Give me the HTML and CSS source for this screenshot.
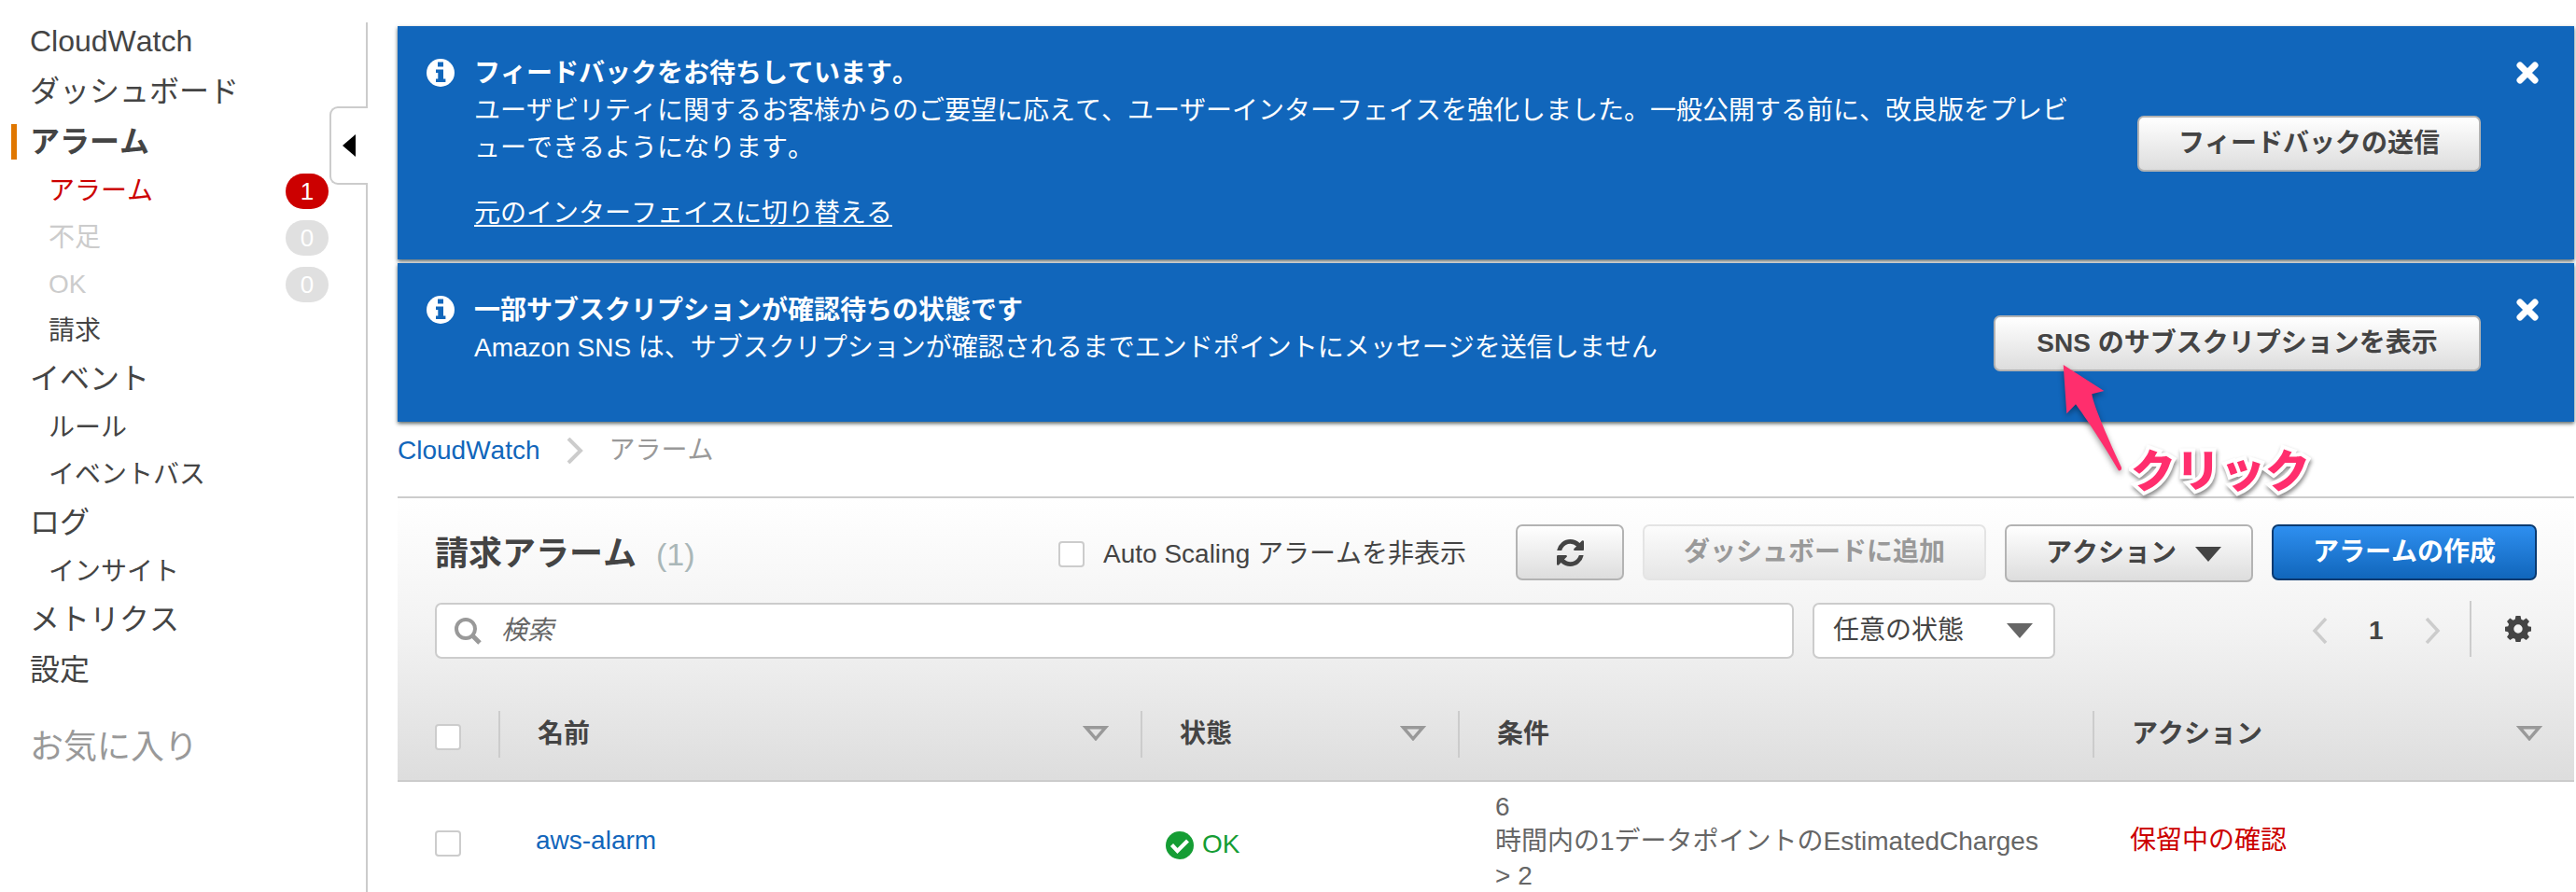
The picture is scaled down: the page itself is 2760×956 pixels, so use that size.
FILE: index.html
```html
<!DOCTYPE html>
<html lang="ja">
<head>
<meta charset="utf-8">
<title>CloudWatch</title>
<link rel="stylesheet" href="styles.css">
</head>
<body>
<svg class="defs" width="0" height="0">
  <symbol id="i-info" viewBox="0 0 30 30"><circle cx="15" cy="15" r="15" fill="#fff"/><path fill="#16b" d="M12 3.600h6v5h-6zM10 11.500h8v10h2.400V25H10v-3.500h2.300V15H10z"/></symbol>
  <symbol id="i-close" viewBox="0 0 24 24"><path d="M4 4l16 16M20 4L4 20" stroke="#fff" stroke-width="7" stroke-linecap="round" fill="none"/></symbol>
  <symbol id="i-sort" viewBox="0 0 28 16"><path d="M3.500 1.700h21L14 13.800z" fill="none" stroke="#999" stroke-width="3.400"/></symbol>
  <symbol id="i-down" viewBox="0 0 28 16"><path d="M0 0h28L14 16z" fill="currentColor"/></symbol>
</svg>
<div class="app">
  <nav class="side">
    <div class="item top">CloudWatch</div>
    <div class="item">ダッシュボード</div>
    <div class="item active">アラーム</div>
    <div class="sub red">アラーム<span class="badge on">1</span></div>
    <div class="sub off">不足<span class="badge">0</span></div>
    <div class="sub off">OK<span class="badge">0</span></div>
    <div class="sub">請求</div>
    <div class="item">イベント</div>
    <div class="sub">ルール</div>
    <div class="sub">イベントバス</div>
    <div class="item">ログ</div>
    <div class="sub">インサイト</div>
    <div class="item">メトリクス</div>
    <div class="item">設定</div>
    <div class="fav">お気に入り</div>
    <div class="tab"><svg width="14" height="24" viewBox="0 0 14 24"><path d="M14 0v24L0 12z"/></svg></div>
  </nav>
  <main class="main">
    <section class="banner b1">
      <svg class="info" width="30" height="30"><use href="#i-info"/></svg>
      <div class="msg"><b>フィードバックをお待ちしています。</b><br>ユーザビリティに関するお客様からのご要望に応えて、ユーザーインターフェイスを強化しました。一般公開する前に、改良版をプレビ<br>ューできるようになります。<div class="switch"><a>元のインターフェイスに切り替える</a></div></div>
      <div class="btn send">フィードバックの送信</div>
      <svg class="close" width="24" height="24"><use href="#i-close"/></svg>
    </section>
    <section class="banner b2">
      <svg class="info" width="30" height="30"><use href="#i-info"/></svg>
      <div class="msg"><b>一部サブスクリプションが確認待ちの状態です</b><br>Amazon SNS は、サブスクリプションが確認されるまでエンドポイントにメッセージを送信しません</div>
      <div class="btn show">SNS のサブスクリプションを表示</div>
      <svg class="close" width="24" height="24"><use href="#i-close"/></svg>
    </section>
    <div class="crumbs"><a>CloudWatch</a><svg width="18" height="28" viewBox="0 0 18 28"><path d="M2 1l13 13L2 27" fill="none" stroke="#ccc" stroke-width="4"/></svg><span>アラーム</span></div>
    <section class="panel">
      <div class="bar">
        <h1>請求アラーム</h1><span class="count">(1)</span>
        <span class="check"></span><span class="lbl">Auto Scaling アラームを非表示</span>
        <div class="btn refresh"><svg width="29" height="29" viewBox="0 0 1536 1536"><path fill="#444" d="M1511 928q0 5-1 7-64 268-268 434.500T764 1536q-146 0-282.500-55T238 1324l-129 129q-19 19-45 19t-45-19-19-45V960q0-26 19-45t45-19h448q26 0 45 19t19 45-19 45l-137 137q71 66 161 102t187 36q134 0 250-65t186-179q11-17 53-117 8-23 30-23h192q13 0 22.500 9.500t9.500 22.500zm25-800v448q0 26-19 45t-45 19h-448q-26 0-45-19t-19-45 19-45l138-138Q969 256 768 256q-134 0-250 65T332 500q-11 17-53 117-8 23-30 23H50q-13 0-22.500-9.500T18 608v-7q65-268 270-434.500T768 0q146 0 284 55.500T1297 212l130-129q19-19 45-19t45 19 19 45z"/></svg></div>
        <div class="btn disabled">ダッシュボードに追加</div>
        <div class="btn act">アクション<svg width="28" height="16"><use href="#i-down"/></svg></div>
        <div class="btn primary">アラームの作成</div>
      </div>
      <div class="filters">
        <div class="search"><svg width="29" height="29" viewBox="0 0 29 29"><circle cx="12" cy="12" r="10" fill="none" stroke="#999" stroke-width="4"/><path d="M19 19l8 8" stroke="#999" stroke-width="5"/></svg><i>検索</i></div>
        <div class="select">任意の状態<svg width="28" height="16"><use href="#i-down"/></svg></div>
        <div class="pager">
          <svg width="18" height="28" viewBox="0 0 18 28"><path d="M15 1L3 14l12 13" fill="none" stroke="#ccc" stroke-width="3.500"/></svg>
          <b>1</b>
          <svg width="18" height="28" viewBox="0 0 18 28"><path d="M3 1l12 13L3 27" fill="none" stroke="#ccc" stroke-width="3.500"/></svg>
        </div>
        <div class="gear"><svg width="28" height="28" viewBox="0 0 28 28"><path fill="#444" fill-rule="evenodd" d="M11.500 0h5l.8 3.800 2.200.9 3.200-2.200 3.300 3.400-2.100 3.200.9 2.200 3.200.5v4.700l-3.200.8-.9 2.200 2.100 3.200-3.300 3.300-3.200-2.100-2.200.9-.8 3.200h-5l-.8-3.200-2.200-.9-3.200 2.100L2 22.700l2.100-3.200-.9-2.200L0 16.500v-4.700l3.200-.5.9-2.200L2 5.900l3.300-3.400 3.200 2.200 2.200-.9zM14 9.300a4.700 4.700 0 1 0 0 9.400 4.700 4.700 0 0 0 0-9.400z"/></svg></div>
      </div>
      <div class="grid head">
        <div><span class="check"></span></div>
        <div class="th">名前<svg width="28" height="16"><use href="#i-sort"/></svg></div>
        <div class="th">状態<svg width="28" height="16"><use href="#i-sort"/></svg></div>
        <div class="th">条件</div>
        <div class="th">アクション<svg width="28" height="16"><use href="#i-sort"/></svg></div>
      </div>
    </section>
    <div class="grid row">
      <div><span class="check"></span></div>
      <div class="name"><a>aws-alarm</a></div>
      <div class="ok"><svg width="30" height="30" viewBox="0 0 30 30"><circle cx="15" cy="15" r="15" fill="#159d34"/><path d="M6.500 14.500l6 6.500 11-11" fill="none" stroke="#fff" stroke-width="4.200"/></svg>OK</div>
      <div class="cond">6<br>時間内の1データポイントのEstimatedCharges<br>&gt; 2</div>
      <div class="pend">保留中の確認</div>
    </div>
  </main>
  <svg class="arrow" width="90" height="130" viewBox="0 0 90 130"><path fill="#ff2e6d" d="M10.700 11L54.300 39l-13 3.300C43 55 60 93 73 121q.5 3.500-3 3.500C60 107 40 75 24 53.300L14.300 63.300z"/></svg>
  <div class="click">クリック</div>
</div>
</body>
</html>
```
FILE: styles.css
```css
* { box-sizing: border-box; }
body { margin: 0; background: #fff; }
.app {
  position: relative; display: flex; width: 2760px; height: 956px; overflow: hidden;
  font: 28px/40px "Liberation Sans", "Noto Sans CJK JP", sans-serif; color: #444; white-space: nowrap;
  font-kerning: none;
}
svg { display: block; flex: none; }
.defs { position: absolute; }
a { color: #16b; }

.side { position: relative; width: 394px; margin-top: 24px; border-right: 2px solid #ccc; flex: none; }
.item { height: 54px; line-height: 52px; font-size: 32px; padding-left: 32px; }
.item.top { height: 48px; line-height: 41px; }
.item.active { font-weight: bold; position: relative; }
.item.active::before { content: ""; position: absolute; left: 12px; top: 7px; width: 6px; height: 38px; background: #e07700; }
.sub { height: 50px; padding: 0 40px 0 52px; display: flex; justify-content: space-between; align-items: center; }
.red { color: #c00; }
.off { color: #ccc; }
.badge { width: 46px; height: 38px; border-radius: 19px; background: #e0e0e0; color: #fff; text-align: center; line-height: 38px; font-size: 26px; }
.badge.on { background: #c00; }
.fav { font-size: 36px; color: #999; padding-left: 32px; line-height: 54px; margin-top: 28px; }
.tab {
  position: absolute; left: 353px; top: 90px; width: 41px; height: 84px; background: #fff;
  border: 2px solid #ccc; border-right: 0; border-radius: 9px 0 0 9px; display: flex; align-items: center; padding-left: 12px;
}

.main { width: 2332px; margin-left: 32px; padding-top: 28px; flex: none; }
.banner { display: flex; background: #16b; color: #fff; box-shadow: 0 2px 4px rgba(0,20,20,.65); padding: 30px 38px 0 31px; }
.b1 { height: 250px; margin-bottom: 4px; }
.b2 { height: 170px; }
.info { margin: 5px 21px 0 0; }
.msg { flex: 1; padding-top: 1px; }
.switch { margin-top: 30px; }
.switch a { color: #fff; text-decoration: underline; text-underline-offset: 3px; text-decoration-thickness: 2px; }
.close { margin: 8px 0 0 38px; }
.btn {
  height: 60px; padding: 0 42px; border: 2px solid #b3b3b3; border-radius: 7px; flex: none;
  background: linear-gradient(#fff, #ddd); color: #444; font-weight: bold; line-height: 54px;
  display: flex; align-items: center;
}
.banner .btn { padding: 0; justify-content: center; }
.send { margin-top: 66px; width: 368px; }
.show { margin-top: 26px; width: 522px; }

.crumbs { display: flex; align-items: center; padding-bottom: 19px; height: 80px; }
.crumbs svg { margin: 0 28px; }
.crumbs span { color: #999; }

.panel { height: 306px; border-top: 2px solid #ccc; border-bottom: 2px solid #ccc; background: linear-gradient(#fff, #f3f3f3 45%, #ddd); }
.bar { display: flex; padding: 28px 40px 0 40px; height: 112px; }
h1 { margin: 0; font-size: 36px; line-height: 63px; width: 237px; }
.count { font-size: 34px; line-height: 65px; color: #aab7b8; width: 431px; }
.check { display: block; width: 28px; height: 28px; border: 2px solid #ccc; border-radius: 4px; background: #fff; }
.bar .check { margin-top: 18px; }
.lbl { line-height: 63px; padding-left: 20px; width: 462px; }
.refresh { margin-right: 20px; width: 116px; padding: 0; justify-content: center; }
.disabled { color: #999; border-color: #e4e4e4; background: linear-gradient(#fcfcfc, #e6e6e6); margin-right: 20px; }
.act { height: 62px; width: 266px; margin-right: 20px; }
.act svg { margin: 2px 0 0 20px; }
.primary { color: #fff; border-color: #0a3a70; background: linear-gradient(#2e8ff0, #16b); width: 284px; }

.filters { display: flex; padding: 0 46px 0 40px; height: 60px; }
.search, .select { height: 60px; border: 2px solid #ccc; border-radius: 7px; background: #fff; display: flex; align-items: center; }
.search { width: 1456px; padding-left: 19px; margin-right: 20px; color: #666; }
.search i { margin-left: 21px; }
.select { width: 260px; padding: 0 22px 0 20px; justify-content: space-between; }
.select svg { color: #666; }
.pager { display: flex; align-items: center; width: 444px; padding-left: 275px; }
.pager b { margin: 0 43px 0 43px; }
.gear { margin-top: -2px; height: 60px; border-left: 2px solid #ccc; padding: 16px 0 0 36px; }

.grid { display: grid; grid-template-columns: 108px 688px 340px 680px 516px; }
.head { margin-top: 56px; height: 50px; }
.head .check { margin: 14px 0 0 40px; }
.th { border-left: 2px solid #ccc; padding: 0 34px 0 40px; font-weight: bold; display: flex; justify-content: space-between; line-height: 49px; }
.th svg { margin-top: 16px; }
.row { height: 118px; }
.row .check { margin: 52px 0 0 40px; }
.name { padding: 43px 0 0 40px; }
.ok { display: flex; padding: 53px 0 0 27px; gap: 9px; color: #159d34; line-height: 28px; }
.cond { padding: 8px 0 0 40px; color: #666; line-height: 37px; height: 118px; }
.pend { padding: 43px 0 0 40px; color: #c00; }

.arrow { position: absolute; left: 2200px; top: 380px; filter: drop-shadow(0 3px 3px rgba(0,0,0,.4)); }
.click {
  position: absolute; left: 2283px; top: 471px; font: 900 48px/60px "Noto Sans CJK JP", sans-serif; color: #ff2e6d;
  -webkit-text-stroke: 8px #fff; paint-order: stroke fill; filter: drop-shadow(1px 3px 2px rgba(0,0,0,.45));
}
```
